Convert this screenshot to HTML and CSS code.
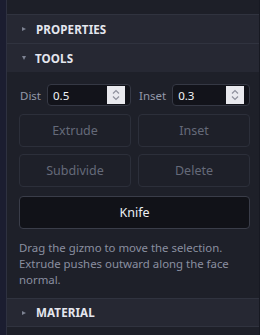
FILE: index.html
```html
<!DOCTYPE html>
<html>
<head>
<meta charset="utf-8">
<link rel="stylesheet" href="styles.css">
</head>
<body>
<div class="app">
  <div class="rail"></div>
  <div class="panel">
    <div class="topbar"></div>
    <div class="section-head">
      <span class="caret caret-right"></span>
      <span class="section-title">PROPERTIES</span>
    </div>
    <div class="section-head">
      <span class="caret caret-down"></span>
      <span class="section-title">TOOLS</span>
    </div>
    <div class="section-body">
      <div class="field-row">
        <label class="field">
          <span class="field-label">Dist</span>
          <span class="num-input">
            <span class="num-value">0.5</span>
            <span class="spinner">
              <svg width="10" height="14" viewBox="0 0 10 14"><path d="M2 5.5 L5 2.5 L8 5.5" fill="none" stroke="#8e909c" stroke-width="1.2"/><path d="M2 8.5 L5 11.5 L8 8.5" fill="none" stroke="#8e909c" stroke-width="1.2"/></svg>
            </span>
          </span>
        </label>
        <label class="field">
          <span class="field-label">Inset</span>
          <span class="num-input">
            <span class="num-value">0.3</span>
            <span class="spinner">
              <svg width="10" height="14" viewBox="0 0 10 14"><path d="M2 5.5 L5 2.5 L8 5.5" fill="none" stroke="#8e909c" stroke-width="1.2"/><path d="M2 8.5 L5 11.5 L8 8.5" fill="none" stroke="#8e909c" stroke-width="1.2"/></svg>
            </span>
          </span>
        </label>
      </div>
      <div class="btn-grid">
        <button class="btn" disabled>Extrude</button>
        <button class="btn" disabled>Inset</button>
        <button class="btn" disabled>Subdivide</button>
        <button class="btn" disabled>Delete</button>
      </div>
      <button class="btn btn-active">Knife</button>
      <p class="hint">Drag the gizmo to move the selection. Extrude pushes outward along the face normal.</p>
    </div>
    <div class="section-head section-head-top">
      <span class="caret caret-right"></span>
      <span class="section-title">MATERIAL</span>
    </div>
    <div class="filler"></div>
  </div>
</div>
</body>
</html>
```

FILE: styles.css
```css
* { box-sizing: border-box; }
html, body { margin: 0; padding: 0; }
body {
  width: 260px;
  height: 335px;
  overflow: hidden;
  background: #1c1e2f;
  font-family: "Noto Sans", "Open Sans", sans-serif;
}
.app {
  display: flex;
  height: 335px;
}
.rail {
  width: 7px;
  background: #1b1d30;
  border-right: 1px solid #2e3140;
  flex: none;
}
.panel {
  flex: 1;
  display: flex;
  flex-direction: column;
  background: #1e2029;
  border-right: 1px solid #171922;
}
.topbar {
  height: 15px;
  background: #1d1f28;
  border-bottom: 1px solid #30333f;
}
.section-head {
  height: 29px;
  display: flex;
  align-items: center;
  padding-left: 15px;
  background: #262833;
  border-bottom: 1px solid #30333f;
}
.section-head + .section-head { border-bottom: none; height: 28px; }
.section-head-top { border-top: 1px solid #30333f; }
.caret {
  width: 0;
  height: 0;
  margin-right: 10px;
}
.caret-right {
  border-top: 2.5px solid transparent;
  border-bottom: 2.5px solid transparent;
  border-left: 4px solid #7d8292;
  margin-right: 10px;
}
.caret-down {
  border-left: 2.5px solid transparent;
  border-right: 2.5px solid transparent;
  border-top: 4px solid #7d8292;
  margin-right: 9px;
}
.section-title {
  font-weight: 700;
  font-size: 11.6px;
  color: #e4e6ee;
  letter-spacing: 0.1px;
}
.section-body {
  padding: 12px 9px 10px 12px;
  display: flex;
  flex-direction: column;
}
.field-row {
  display: flex;
  gap: 7px;
}
.field {
  flex: 1;
  display: flex;
  align-items: center;
  gap: 6px;
}
.field-label {
  font-size: 11.5px;
  color: #9499aa;
  padding-left: 1px;
}
.num-input {
  flex: 1;
  height: 22px;
  display: flex;
  align-items: center;
  justify-content: space-between;
  background: #12131a;
  border: 1px solid #353844;
  border-radius: 4px;
  padding: 0 5px 0 5px;
}
.num-value {
  font-size: 11.5px;
  color: #f2f3f7;
}
.spinner {
  width: 18px;
  height: 18px;
  background: #e9e9ee;
  display: flex;
  align-items: center;
  justify-content: center;
}
.btn-grid {
  display: grid;
  grid-template-columns: 1fr 1fr;
  column-gap: 7px;
  row-gap: 7px;
  margin-top: 8px;
}
.btn {
  height: 33px;
  font-family: inherit;
  font-size: 12.5px;
  background: #1e2029;
  border: 1px solid #2c2f3a;
  border-radius: 4px;
  color: #656a79;
  padding: 0;
}
.btn-active {
  margin-top: 9px;
  background: #111218;
  border-color: #3a3d49;
  color: #eceef4;
}
.hint {
  margin: 11px 0 0 0;
  font-size: 11.4px;
  line-height: 16px;
  color: #8a8fa0;
}
.filler {
  flex: 1;
  background: #1e2029;
}
```
